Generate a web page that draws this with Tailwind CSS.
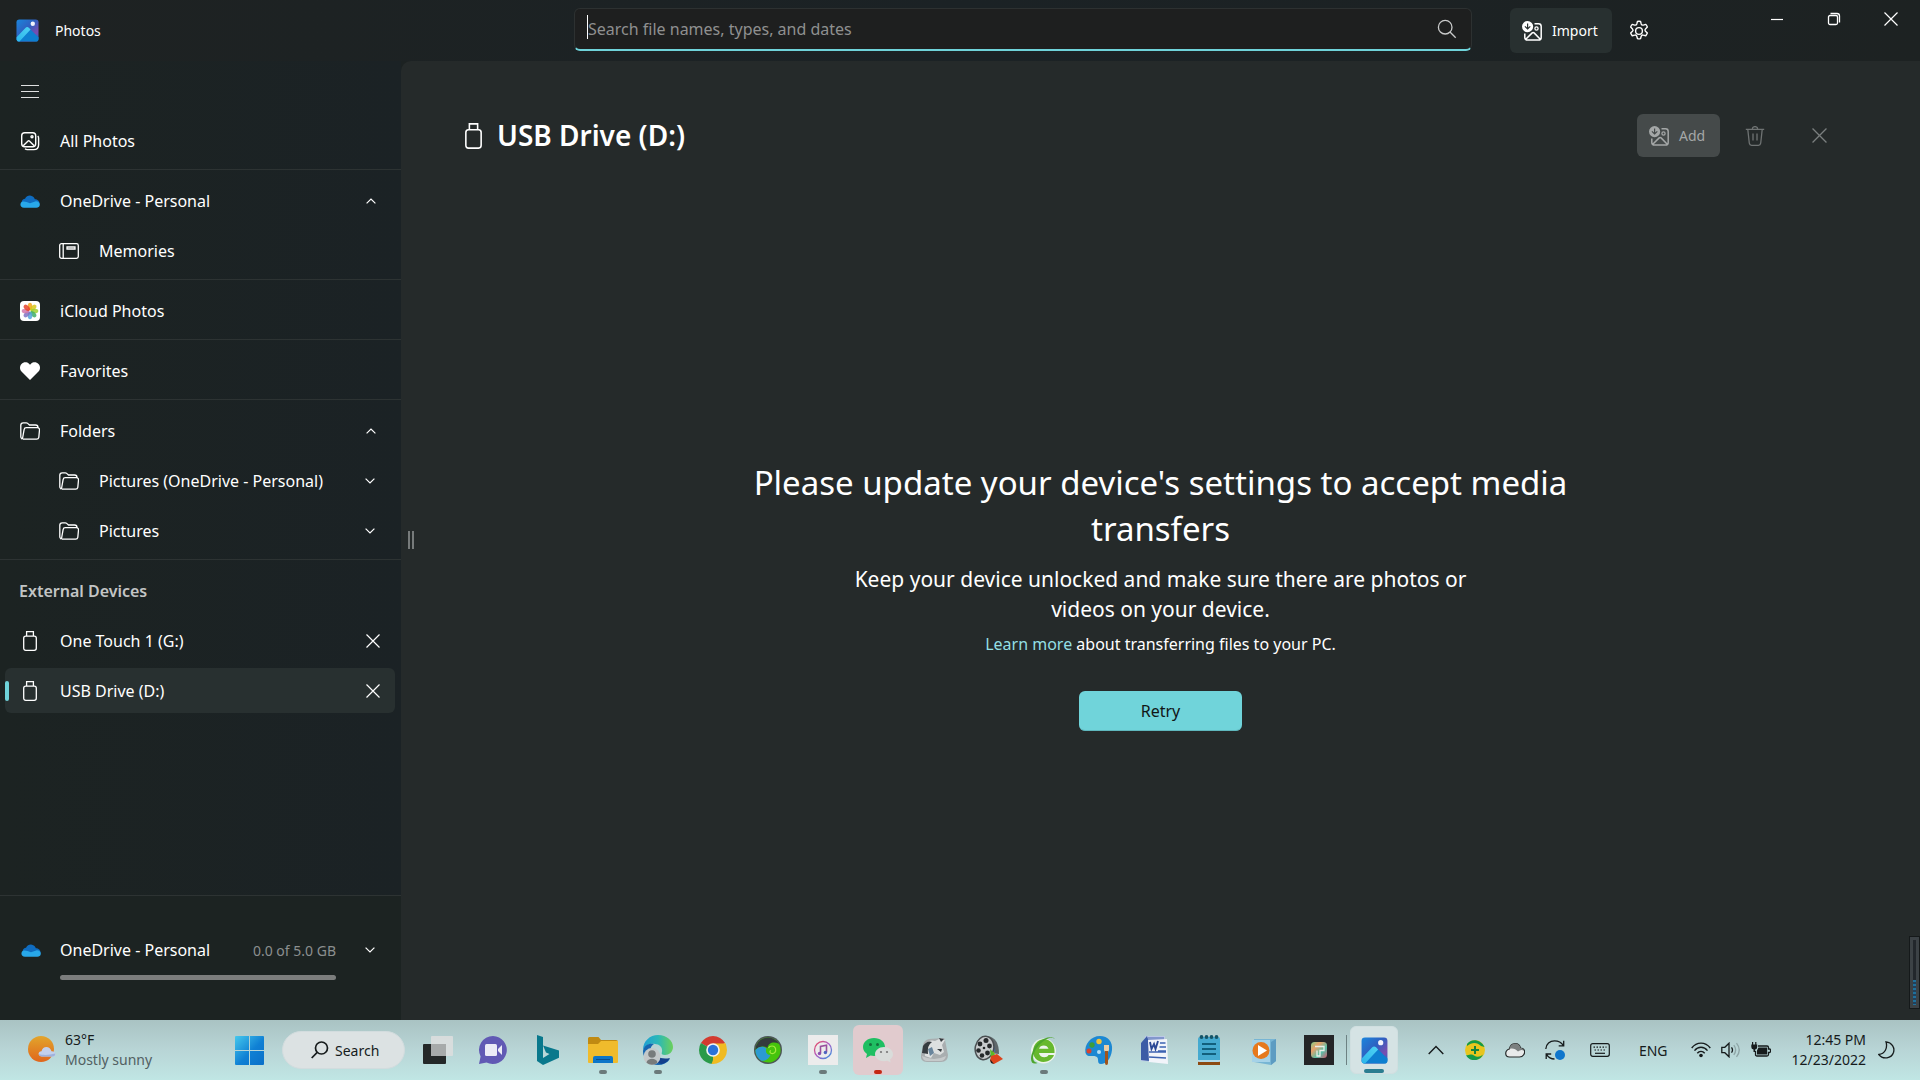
<!DOCTYPE html>
<html lang="en">
<head>
<meta charset="utf-8">
<title>Photos</title>
<script src="https://cdn.jsdelivr.net/npm/@tailwindcss/browser@4"></script>
</head>
<body class="flex min-h-screen flex-col overflow-x-hidden bg-[#1c2222] font-['Noto_Sans','Open_Sans',sans-serif] text-[16px] text-white">

<svg class="absolute size-0" aria-hidden="true">
  <defs>
    <linearGradient id="pg" x1="0" y1="0" x2="1" y2="1"><stop offset="0" stop-color="#1a86dc"/><stop offset=".45" stop-color="#2f5fc0"/><stop offset=".75" stop-color="#7a4cb0"/><stop offset="1" stop-color="#1470c4"/></linearGradient>
    <linearGradient id="pm" x1="0" y1="1" x2="1" y2="0"><stop offset="0" stop-color="#2bb5ea"/><stop offset="1" stop-color="#4fd2f4"/></linearGradient>
    <linearGradient id="win" x1="0" y1="0" x2="1" y2="1"><stop offset="0" stop-color="#45c8ec"/><stop offset=".55" stop-color="#0f80d4"/><stop offset="1" stop-color="#0a6fc8"/></linearGradient>
    <linearGradient id="sun" x1="0" y1="0" x2="0" y2="1"><stop offset="0" stop-color="#e2a52c"/><stop offset="1" stop-color="#e0661c"/></linearGradient>
    <linearGradient id="edge" x1="0" y1="0" x2="1" y2="0"><stop offset="0" stop-color="#1f9fd4"/><stop offset=".5" stop-color="#2ab8b8"/><stop offset="1" stop-color="#6cd05a"/></linearGradient>
    <linearGradient id="note" x1="0" y1="0" x2="1" y2="1"><stop offset="0" stop-color="#ee4a5c"/><stop offset=".5" stop-color="#a85cc8"/><stop offset="1" stop-color="#2f98e0"/></linearGradient>
    <linearGradient id="rain" x1="0" y1="0" x2="1" y2="1"><stop offset="0" stop-color="#7fd08a"/><stop offset=".3" stop-color="#e9a06a"/><stop offset=".65" stop-color="#55c0a8"/><stop offset="1" stop-color="#d8596e"/></linearGradient>
    <symbol id="photos" viewBox="0 0 24 24">
      <rect x=".5" y=".5" width="23" height="23" rx="3" fill="url(#pg)"/>
      <path d="M1 20 10 9.800q2-2 4 0L23.500 19v2a2.500 2.500 0 0 1-2.500 2.500H3A2.500 2.500 0 0 1 .6 21z" fill="#0e7fd0"/>
      <path d="M.6 19 9.800 9.300q1.800-1.800 3.800 0l1.600 1.700L3.600 23.500H3A2.500 2.500 0 0 1 .6 21z" fill="url(#pm)"/>
      <circle cx="17.500" cy="5" r="2.300" fill="#f1f2fc"/>
    </symbol>
    <symbol id="cloud" viewBox="0 0 20 13">
      <path d="M2 9C.8 5.600 3 3.800 5 3.700 6.500.8 9.700-.1 12.200 1.200c1.400.7 2.300 1.800 2.700 3.100 2.500 0 4.800 1.800 4.700 4.500z" fill="#0f6cc0"/>
      <path d="M4 12.800C.8 12.800-.3 10 .9 7.700 1.900 6 4.300 6.200 6.500 6.900L10 8.300l5.900-2c2.300.1 4.200 1.500 3.900 3.700-.3 1.700-1.500 2.800-3.400 2.800z" fill="#28a8ea"/>
    </symbol>
    <symbol id="folder" viewBox="0 0 20 18">
      <path d="M3 17.200h13.600c1.300 0 2-.8 2.200-1.900l.7-7.300c.1-1.400-.7-2.300-2-2.300H6.300c-1.200 0-2 .7-2.200 1.900L2.600 16c-.1.700-.5 1.100-.9.600-.6-.5-.9-1.100-.9-1.900V3.200C.8 1.800 1.800.8 3.200.8h3c.6 0 1.100.2 1.500.6L9.500 3h6c1.500 0 2.500.9 2.500 2.500" fill="none" stroke="currentColor" stroke-width="1.300"/>
    </symbol>
    <symbol id="usb" viewBox="0 0 14 20">
      <path d="M3.600 5V.7h6.800V5M2.800 5.200h8.400c1.300 0 2.100.8 2.100 2.100v9.900c0 1.300-.8 2.100-2.100 2.100H2.800C1.500 19.300.7 18.500.7 17.200V7.300c0-1.300.8-2.100 2.100-2.100z" fill="none" stroke="currentColor" stroke-width="1.300"/>
    </symbol>
    <symbol id="down" viewBox="0 0 10 6"><path d="m.6.600 4.400 4.400L9.400.6" fill="none" stroke="currentColor" stroke-width="1.200"/></symbol>
    <symbol id="up" viewBox="0 0 10 6"><path d="M.6 5.400 5 1l4.400 4.400" fill="none" stroke="currentColor" stroke-width="1.200"/></symbol>
    <symbol id="x" viewBox="0 0 14 14"><path d="m.5.500 13 13m0-13-13 13" fill="none" stroke="currentColor" stroke-width="1.200"/></symbol>
    <symbol id="import" viewBox="0 0 20 20">
      <path d="M12.500 2.700h4c1.600 0 2.700 1.100 2.700 2.700v11c0 1.600-1.100 2.700-2.700 2.700h-11c-1.600 0-2.700-1.100-2.700-2.700v-4M3.500 18.500l6.700-6.600c.6-.6 1.300-.6 1.900 0l6.400 6.600" fill="none" stroke="currentColor" stroke-width="1.500"/>
      <circle cx="14.500" cy="7.500" r="1.600" fill="none" stroke="currentColor" stroke-width="1.300"/>
      <path fill-rule="evenodd" d="M5.600 0a5.600 5.600 0 1 1 0 11.200A5.600 5.600 0 0 1 5.600 0zM5 2.500v4L3.300 4.900l-.8.800 3.100 3 3.100-3-.8-.8-1.700 1.600v-4z" fill="currentColor"/>
    </symbol>
  </defs>
</svg>

<header class="flex h-[61px] shrink-0 items-start bg-linear-to-r from-[#1e2222] via-[#1b2225] to-[#1d2222]">
  <div class="flex h-[61px] w-[574px] shrink-0 items-center gap-4 pl-4">
    <svg class="size-[23px]"><use href="#photos"/></svg>
    <h1 class="text-[14px]">Photos</h1>
  </div>
  <form class="relative mt-2 flex h-[43px] min-w-0 flex-1 items-center rounded-md border border-[#2d3131] border-b-2 border-b-[#6fd3da] bg-[#1e1f1f] pr-3">
    <input type="text" aria-label="Search" placeholder="Search file names, types, and dates" class="h-full min-w-0 flex-1 bg-transparent pl-[13px] text-[16px] outline-none placeholder:text-[#8f9090]">
    <span class="absolute left-3 top-1.5 h-6 w-px bg-white"></span>
    <button type="button" aria-label="Search" class="mr-0.5 text-[#c9caca]">
      <svg class="size-5" viewBox="0 0 20 20" fill="none" stroke="currentColor" stroke-width="1.300"><circle cx="8.200" cy="8.200" r="6.800"/><path d="m13 13 5.700 5.700"/></svg>
    </button>
  </form>
  <div class="flex w-[448px] shrink-0 items-start justify-between pl-[38px] pr-[22px]">
    <div class="flex items-center gap-4 pt-2">
      <button type="button" class="flex h-[45px] w-[102px] items-center gap-2.5 rounded-md bg-[#283030] pl-3 text-[14px]">
        <svg class="size-5 shrink-0"><use href="#import"/></svg>Import
      </button>
      <button type="button" aria-label="Settings">
        <svg class="size-[22px]" viewBox="0 0 24 24" fill="none" stroke="currentColor" stroke-width="1.500" stroke-linejoin="round"><circle cx="12" cy="12" r="3.700"/><path d="m9.600 4.300.7-2.700c1.100-.3 2.300-.3 3.400 0l.7 2.700c.3.900 1.300 1.500 2.300 1.200l2.700-.7c.8.900 1.300 1.800 1.700 2.900l-2 2c-.7.700-.7 1.900 0 2.600l2 2c-.4 1.100-.9 2-1.700 2.900l-2.700-.7c-1-.3-2 .3-2.300 1.200l-.7 2.700c-1.100.3-2.300.3-3.400 0l-.7-2.700c-.3-.9-1.300-1.500-2.300-1.200l-2.700.7c-.8-.9-1.300-1.800-1.700-2.900l2-2c.7-.7.7-1.900 0-2.600l-2-2c.4-1.100.9-2 1.700-2.900l2.700.7c1 .3 2-.3 2.300-1.200z"/></svg>
      </button>
    </div>
    <div class="flex gap-[43px] pt-3">
      <button type="button" aria-label="Minimize" class="size-[14px]"><svg class="size-[14px]" viewBox="0 0 14 14"><path d="M1 7.500h12" stroke="currentColor" stroke-width="1.200"/></svg></button>
      <button type="button" aria-label="Restore" class="size-[14px]"><svg class="size-[14px]" viewBox="0 0 14 14" fill="none" stroke="currentColor" stroke-width="1.300"><rect x="1.500" y="3.500" width="9" height="9" rx="1.500"/><path d="M3.500 1.500H10c1.500 0 2.500 1 2.500 2.500v6.500"/></svg></button>
      <button type="button" aria-label="Close" class="size-[14px]"><svg class="size-[14px]"><use href="#x"/></svg></button>
    </div>
  </div>
</header>

<div class="flex flex-1">
  <aside class="flex w-[401px] shrink-0 flex-col bg-linear-to-r from-[#1c2322] to-[#1b2225]">
    <nav class="flex flex-1 flex-col">
      <div class="border-b border-[#2d3333] pt-[5px] pb-[3px]">
        <button type="button" aria-label="Menu" class="flex h-[50px] items-center pl-5">
          <svg class="h-[15px] w-5" viewBox="0 0 20 15"><path d="M1 1.500h18M1 7.500h18M1 13.500h18" stroke="#dfe0e0" stroke-width="1.200"/></svg>
        </button>
        <a href="#" class="flex h-[50px] items-center gap-5 pl-5">
          <svg class="size-5" viewBox="0 0 20 20" fill="none" stroke="currentColor" stroke-width="1.400"><rect x="1.700" y="1.700" width="14" height="14" rx="3"/><path d="m3.200 14.800 4.600-4.600c.6-.6 1.200-.6 1.800 0l4.600 4.600M17.800 5c.6.600.8 1.300.8 2.200v6.500c0 3-1.900 4.900-4.900 4.900H7.200c-.9 0-1.600-.3-2.200-.8"/><circle cx="12" cy="5.700" r="1"/></svg>
          All Photos
        </a>
      </div>
      <div class="border-b border-[#2d3333] pt-[6px] pb-[3px]">
        <button type="button" class="flex h-[50px] w-full items-center gap-5 pl-5 pr-[25px]">
          <svg class="h-[13px] w-5"><use href="#cloud"/></svg><span class="flex-1 text-left">OneDrive - Personal</span>
          <svg class="h-[6px] w-[10px]"><use href="#up"/></svg>
        </button>
        <a href="#" class="flex h-[50px] items-center gap-5 pl-[59px]">
          <svg class="h-4 w-5" viewBox="0 0 20 16" fill="none" stroke="currentColor" stroke-width="1.300"><rect x=".7" y=".7" width="18.600" height="14.600" rx="1.800"/><path d="M4.200 1v14M8 4h8v2H8z"/></svg>
          Memories
        </a>
      </div>
      <div class="border-b border-[#2d3333] pt-[6px] pb-[3px]">
        <a href="#" class="flex h-[50px] items-center gap-5 pl-5">
          <svg class="size-5" viewBox="0 0 20 20"><rect width="20" height="20" rx="4" fill="#fff"/><g fill-opacity=".85"><ellipse cx="10" cy="5.500" rx="2.300" ry="3.800" fill="#f3a61c"/><ellipse cx="10" cy="5.500" rx="2.300" ry="3.800" fill="#d8c81c" transform="rotate(45 10 10)"/><ellipse cx="10" cy="5.500" rx="2.300" ry="3.800" fill="#9fd030" transform="rotate(90 10 10)"/><ellipse cx="10" cy="5.500" rx="2.300" ry="3.800" fill="#3fae68" transform="rotate(135 10 10)"/><ellipse cx="10" cy="5.500" rx="2.300" ry="3.800" fill="#56a6dc" transform="rotate(180 10 10)"/><ellipse cx="10" cy="5.500" rx="2.300" ry="3.800" fill="#7f74c4" transform="rotate(225 10 10)"/><ellipse cx="10" cy="5.500" rx="2.300" ry="3.800" fill="#d478ac" transform="rotate(270 10 10)"/><ellipse cx="10" cy="5.500" rx="2.300" ry="3.800" fill="#e8432a" transform="rotate(315 10 10)"/></g></svg>
          iCloud Photos
        </a>
      </div>
      <div class="border-b border-[#2d3333] pt-[6px] pb-[3px]">
        <a href="#" class="flex h-[50px] items-center gap-5 pl-5">
          <svg class="h-[18px] w-5" viewBox="0 0 20 18"><path d="M10 18 1.500 9.500C-.5 7.400-.5 4 1.500 2 3.500-.1 6.900-.2 9 1.800l1 1 1-1c2.100-2 5.500-1.900 7.500.2s2 5.400 0 7.500z" fill="#fff"/></svg>
          Favorites
        </a>
      </div>
      <div class="border-b border-[#2d3333] pt-[6px] pb-[3px]">
        <button type="button" class="flex h-[50px] w-full items-center gap-5 pl-5 pr-[25px]">
          <svg class="h-[18px] w-5"><use href="#folder"/></svg><span class="flex-1 text-left">Folders</span>
          <svg class="h-[6px] w-[10px]"><use href="#up"/></svg>
        </button>
        <button type="button" class="flex h-[50px] w-full items-center gap-5 pl-[59px] pr-[26px]">
          <svg class="h-[18px] w-5"><use href="#folder"/></svg><span class="flex-1 text-left">Pictures (OneDrive - Personal)</span>
          <svg class="h-[6px] w-[10px]"><use href="#down"/></svg>
        </button>
        <button type="button" class="flex h-[50px] w-full items-center gap-5 pl-[59px] pr-[26px]">
          <svg class="h-[18px] w-5"><use href="#folder"/></svg><span class="flex-1 text-left">Pictures</span>
          <svg class="h-[6px] w-[10px]"><use href="#down"/></svg>
        </button>
      </div>
      <h2 class="mt-[6px] flex h-[50px] items-center pl-[19px] font-semibold text-[#c3c5c5]">External Devices</h2>
      <div class="flex flex-col gap-[5px] pl-[5px] pr-1.5 pt-0.5">
        <div class="flex h-[45px] items-center pr-[15px]">
          <a href="#" class="flex flex-1 items-center gap-[23px] pl-[18px]"><svg class="h-5 w-[14px]"><use href="#usb"/></svg>One Touch 1 (G:)</a>
          <button type="button" aria-label="Remove One Touch 1"><svg class="size-[14px]"><use href="#x"/></svg></button>
        </div>
        <div class="flex h-[45px] items-center rounded-md bg-[#283030] pr-[15px]">
          <span class="h-5 w-1 rounded-full bg-[#6fd3da]"></span>
          <a href="#" class="flex flex-1 items-center gap-[23px] pl-[14px]"><svg class="h-5 w-[14px]"><use href="#usb"/></svg>USB Drive (D:)</a>
          <button type="button" aria-label="Remove USB Drive"><svg class="size-[14px]"><use href="#x"/></svg></button>
        </div>
      </div>
    </nav>
    <footer class="h-[125px] border-t border-[#2d3333] bg-[#1c2322] pt-[40px]">
      <div class="flex h-[28px] items-center pl-[21px] pr-[26px]">
        <svg class="h-[13px] w-5"><use href="#cloud"/></svg>
        <span class="ml-[19px] flex-1">OneDrive - Personal</span>
        <span class="text-[14px] text-[#8b8f8f]">0.0 of 5.0 GB</span>
        <svg class="ml-[29px] h-[6px] w-[10px]"><use href="#down"/></svg>
      </div>
      <div class="mt-[11px] mr-[65px] ml-[60px] h-[5px] rounded-full bg-[#7b7d7d]"></div>
    </footer>
  </aside>

  <main class="relative flex flex-1 flex-col rounded-tl-[10px] bg-[#252a2a]">
    <div class="flex items-center pt-[53px] pl-16 pr-[93px]">
      <svg class="h-[26px] w-[17px]" viewBox="0 0 14 20" preserveAspectRatio="none"><use href="#usb"/></svg>
      <h2 class="ml-[15px] flex-1 text-[28px] leading-[43px] font-semibold">USB Drive (D:)</h2>
      <button type="button" disabled class="flex h-[43px] w-[83px] items-center gap-2.5 rounded-md bg-[#454a4a] pl-3 text-[14px] text-[#a4a7a7]"><svg class="size-5 shrink-0"><use href="#import"/></svg>Add</button>
      <button type="button" disabled aria-label="Delete" class="ml-[25px] text-[#6f7373]"><svg class="size-5" viewBox="0 0 20 20" fill="none" stroke="currentColor" stroke-width="1.300"><path d="M.8 3.300h18.400M7.300 3c0-1.600 1.100-2.400 2.700-2.400s2.700.8 2.700 2.400M2.800 3.500l1.500 13.700c.2 1.300 1 2.100 2.300 2.100h6.800c1.300 0 2.100-.8 2.300-2.100l1.500-13.700M8 7.500v7M12 7.500v7"/></svg></button>
      <button type="button" disabled aria-label="Close" class="ml-[47px] text-[#7b7f7f]"><svg class="size-[15px]"><use href="#x"/></svg></button>
    </div>
    <div class="mx-auto flex w-[860px] flex-col items-center pt-[303px] text-center">
      <h3 class="text-[33px] leading-[46px]">Please update your device's settings to accept media<br>transfers</h3>
      <p class="mt-[12px] text-[21px] leading-[30px]">Keep your device unlocked and make sure there are photos or<br>videos on your device.</p>
      <p class="mt-[8px] text-[16px] leading-[24px]"><a href="#" class="text-[#93dfe4]">Learn more</a> about transferring files to your PC.</p>
      <button type="button" class="mt-[35px] h-[40px] w-[163px] rounded-md border-b border-[#5fb7bd] bg-[#70d4da] text-[16px] text-[#101616]">Retry</button>
    </div>
    <div class="absolute top-[470px] left-[7px] flex h-[18px] gap-0.5"><i class="w-[2px] bg-[#777b7b]"></i><i class="w-[2px] bg-[#777b7b]"></i></div>
    <div class="absolute right-0 bottom-[11px] flex h-[73px] w-[11px] flex-col justify-end border border-[#15191a] bg-[#3c4246] p-[3px]">
      <div class="flex flex-1 flex-col justify-end bg-[#22272c]"><div class="h-[25px] bg-[repeating-linear-gradient(#1f709c_0_2px,#23405a_2px_4px)]"></div></div>
    </div>
  </main>
</div>

<footer class="flex h-[60px] shrink-0 items-center bg-linear-to-b from-[#a9c3c3] via-[#b8d5d6] to-[#c0e6e4] text-[14px] text-[#161b1c]">
  <button type="button" class="flex h-full w-[221px] shrink-0 items-center gap-[9px] pl-7 text-left leading-5">
    <svg class="h-7 w-7" viewBox="0 0 28 28"><circle cx="13" cy="13" r="13" fill="url(#sun)"/><path d="M14 20.500c-4.500 0-4.500-5-.5-5.200 1-5.600 8.500-5.800 10 0 5-.2 5.500 5.200 1 5.200z" fill="#c3d0ec"/><path d="M14 20.500c-2 0-3-1.200-3-2.500 4 1.500 11 1 16.300-.5 0 1.700-1 3-2.800 3z" fill="#9fb2dc"/></svg>
    <span><span class="block">63°F</span><span class="block text-[#526062]">Mostly sunny</span></span>
  </button>
  <div class="flex h-full items-center">
    <button type="button" aria-label="Start" class="ml-[14px]"><svg class="size-[29px]" viewBox="0 0 29 29"><path d="M1 0h13v14H0V1q0-1 1-1zM15 0h13q1 0 1 1v13H15zM0 15h14v14H1q-1 0-1-1zM15 15h14v13q0 1-1 1H15z" fill="url(#win)"/></svg></button>
    <button type="button" class="mr-[5px] ml-[18px] flex h-[38px] w-[123px] items-center gap-[6px] rounded-full border border-[#d2dcde] bg-[#dce2e3] pl-7">
      <svg class="size-[18px]" viewBox="0 0 18 18" fill="none" stroke="currentColor" stroke-width="1.700"><circle cx="10.500" cy="7" r="6"/><path d="m6.200 11.400-5.500 5.600"/></svg>Search
    </button>
    <button type="button" aria-label="Task view" class="flex h-full w-[55px] items-center justify-center"><svg class="size-[30px]" viewBox="0 0 30 30"><rect x="0" y="9" width="23" height="20" rx="1" fill="#242828"/><rect x="8" y="1" width="22" height="20" rx="1" fill="#dcdede" fill-opacity=".9"/><path d="M8 9h15v12H8z" fill="#a7aaaa"/></svg></button>
    <button type="button" aria-label="Chat" class="flex h-full w-[55px] items-center justify-center"><svg class="size-[30px]" viewBox="0 0 30 30"><path d="M15 1a14 14 0 1 1-6.500 26.500L1 29l1.600-7.500A14 14 0 0 1 15 1z" fill="#6159b4"/><rect x="7" y="9" width="12" height="12" rx="1.500" fill="#ecebf6"/><path d="m20 14 4-4v10l-4-4z" fill="#ecebf6"/></svg></button>
    <button type="button" aria-label="Bing" class="flex h-full w-[55px] items-center justify-center"><svg class="size-[30px]" viewBox="0 0 30 30"><path d="m4 0 6 2v21l6.500-4-3.500-1.500-3-7L26 15.500v7.300L10 30l-6-4z" fill="#09788c"/></svg></button>
    <button type="button" aria-label="File Explorer" class="relative flex h-full w-[55px] items-center justify-center"><svg class="size-[30px]" viewBox="0 0 30 30"><path d="M0 3.500Q0 2 1.500 2h9L13 5h15q2 0 2 2v4H0z" fill="#c08a12"/><path d="M0 9h10l3-3h17v21q0 1-1 1H1q-1 0-1-1z" fill="#f0bb2c"/><path d="M5 28v-5q0-2 2-2h16q2 0 2 2v5z" fill="#0d76c8"/><path d="M8 24.500h14" stroke="#0a4f90" stroke-width="1"/></svg><i class="absolute bottom-1.5 h-1 w-2 rounded-full bg-[#6b7a7b]"></i></button>
    <button type="button" aria-label="Edge" class="relative flex h-full w-[55px] items-center justify-center"><svg class="size-[30px]" viewBox="0 0 30 30"><path d="M0 15C0 6 7 0 15 0c9 0 15 6 15 12 0 5-4 8-8 8-3 0-4-1-3-3 1-5-3-8-7-8C7 8 2 11 0 15z" fill="url(#edge)"/><path d="M0 16C1 10 6 8 11 9c-4 2-5 8-2 13 3 5 9 7 18 2-3 4-7 6-12 6C6 30 0 24 0 16z" fill="#1565b0"/><path d="M12 15c0 6 5 10 15 8-1 2-4 5-8 6-5 0-9-5-7-14z" fill="#123f8c"/><circle cx="9" cy="21.500" r="8.500" fill="#c3c8c9"/><circle cx="9" cy="19" r="3.800" fill="#777b7b"/><path d="M3.500 27.500c1-5 10-5 11 0-3 3-8 3-11 0z" fill="#777b7b"/></svg><i class="absolute bottom-1.5 h-1 w-2 rounded-full bg-[#6b7a7b]"></i></button>
    <button type="button" aria-label="Chrome" class="flex h-full w-[55px] items-center justify-center"><svg class="size-[28px]" viewBox="0 0 28 28"><path d="M14 14 1.900 7A14 14 0 0 1 26.100 7z" fill="#d33b30"/><path d="M14 14 26.100 7A14 14 0 0 1 14 28z" fill="#f0bb22"/><path d="M14 14v14A14 14 0 0 1 1.900 7z" fill="#2a9a48"/><path d="M14 7.500h12.500L27.200 9 20 17l-6 11-1.500-.1 3-8z" fill="#f0bb22"/><circle cx="14" cy="14" r="6.800" fill="#f2f4f4"/><circle cx="14" cy="14" r="5.200" fill="#2a72da"/></svg></button>
    <button type="button" aria-label="Webroot" class="flex h-full w-[55px] items-center justify-center"><svg class="size-[28px]" viewBox="0 0 28 28"><circle cx="14" cy="14" r="14" fill="#4c5557"/><circle cx="14" cy="14" r="12.600" fill="#45c40c"/><path d="M1.400 14A12.600 12.600 0 0 1 25 8c-5-3-11-1-11.500 4-4-2.500-9-1.500-12.100 2z" fill="#343b3d"/><path d="M1.400 14c3-3.500 8-4.500 11-1.500-1.500 3.500.5 6.500 4 6.500-1.500 4-6 6.500-9 5.700A12.600 12.600 0 0 1 1.400 14z" fill="#2b9ad2"/><path d="M14.500 12c1-2.500 6-3 7 .5.800 3-1 5.500-4 5-2-.5-2-2.500-.5-3" fill="none" stroke="#a4ea3e" stroke-width="1.200"/></svg></button>
    <button type="button" aria-label="iTunes" class="relative flex h-full w-[55px] items-center justify-center"><svg class="size-[30px]" viewBox="0 0 30 30"><path d="M0 0h30v30H0z" fill="#ececec"/><circle cx="15" cy="15" r="8.500" fill="none" stroke="url(#note)" stroke-width="1.300"/><path d="M12.500 18v-6.500l6-1.300V17" fill="none" stroke="#9a4f9c" stroke-width="1.600"/><circle cx="11.500" cy="18.500" r="1.700" fill="#8a4fb0"/><circle cx="17.400" cy="17.500" r="1.700" fill="#5064c0"/></svg><i class="absolute bottom-1.5 h-1 w-2 rounded-full bg-[#6b7a7b]"></i></button>
    <button type="button" aria-label="WeChat" class="relative mx-[3px] flex h-[50px] w-[50px] items-center justify-center rounded-md bg-[#e1cbce]"><svg class="size-[30px]" viewBox="0 0 30 30"><path d="M11 3c6.500 0 11 4 11 9s-4.500 9-11 9c-1 0-2.500-.2-3.500-.5L3 23l1-4C1.500 17 0 15 0 12c0-5 4.500-9 11-9z" fill="#1fbf62"/><circle cx="7.500" cy="9.500" r="1.500" fill="#136f3c"/><circle cx="14.500" cy="9.500" r="1.500" fill="#136f3c"/><path d="M21 12c5 0 9 3.200 9 7.300 0 2.200-1.200 4-3 5.300l.7 2.900-3.300-1.700c-1 .3-2 .5-3.400.5-5 0-9-3-9-7s4-7.300 9-7.300z" fill="#d9dcda"/><circle cx="18" cy="17" r="1.100" fill="#777"/><circle cx="24" cy="17" r="1.100" fill="#777"/></svg><i class="absolute bottom-[1px] h-1 w-2 rounded-full bg-[#c42814]"></i></button>
    <button type="button" aria-label="Disk utility" class="flex h-full w-[55px] items-center justify-center"><svg class="size-[28px]" viewBox="0 0 28 28"><path d="M3 9q1-5 6-6l14-1q2 0 2 2l3 15q0 7-7 7H7q-7 0-6-7z" fill="#a9aeb0"/><path d="M4 9q5-6 11-4l6-3 4 2-3 5 2 7-4 3-6-2-3 5-6-2z" fill="#dde0e0"/><path d="M3 10q4-6 9-4-5 3-4 12l-6-1zM19 2l5 1-3 3zM17 13h5l-1 3z" fill="#363c40"/><path d="m8 13 4-2 2 6-4 3z" fill="#69859c"/><path d="M2 20q12 6 24 0-1 5-6 5H7q-4 0-5-5z" fill="#c6cacb"/></svg></button>
    <button type="button" aria-label="Movie Maker" class="flex h-full w-[55px] items-center justify-center"><svg class="size-[30px]" viewBox="0 0 30 30"><path d="M14 1q11 2 11 18l-9-1z" fill="#5f686b"/><path d="m14 5 7 14-5 2-3-10z" fill="#eca21c"/><path d="m14 6 6 4 1 8z" fill="#376fc6"/><ellipse cx="10.500" cy="13" rx="10" ry="12.500" fill="#4a4f52" transform="rotate(12 10.500 13)"/><ellipse cx="10.500" cy="13" rx="8.500" ry="11" fill="#c7cbcd" transform="rotate(12 10.500 13)"/><g fill="#24282a"><circle cx="12" cy="5.500" r="2.500"/><circle cx="6" cy="9" r="2.400"/><circle cx="15.500" cy="11" r="2.400"/><circle cx="4.500" cy="15.500" r="2.300"/><circle cx="13.500" cy="18" r="2.400"/><circle cx="8" cy="20.500" r="2.300"/><circle cx="10" cy="13" r="1.300"/></g><path d="m16 14 5 5-4 5z" fill="#58ba28"/><path d="m17 21 6-2 6 5-9 5q-2 0-4-3z" fill="#dd441c"/><path d="m16 24 4 5-3-1z" fill="#222"/></svg></button>
    <button type="button" aria-label="Internet browser" class="relative flex h-full w-[55px] items-center justify-center"><svg class="size-[30px]" viewBox="0 0 30 30"><circle cx="14.500" cy="16" r="12.500" fill="#edf4ec"/><path d="M25.500 18H10c.5 5 8 5.500 9.500 2h5.500c-3 8-14 9-18.500 3.500S4 8 11 5c8-3.200 15.500 3 14.500 13zM10 13.800h9.500c-1-4.500-8.500-4.500-9.500 0z" fill="#67b82e"/><path d="M25.500 4C21-1 6 5 2.500 20c-1.600 7 1 10 6 8C0 27 5 13 14 6.500 20 2 25 1.500 25.500 4z" fill="#4da52c"/></svg><i class="absolute bottom-1.5 h-1 w-2 rounded-full bg-[#6b7a7b]"></i></button>
    <button type="button" aria-label="Paint" class="flex h-full w-[55px] items-center justify-center"><svg class="size-[30px]" viewBox="0 0 30 30"><path d="M16 1c8 0 13 6 12 14-1 9-6 14-11 14-5-.3-1-6-5-7.500C8 20 3 23 1.500 18 0 9 7 1 16 1z" fill="#1d88d2"/><circle cx="15" cy="6.500" r="2.700" fill="#f3c33a"/><circle cx="8" cy="10" r="2.700" fill="#3e9d3a"/><circle cx="5" cy="16" r="2.500" fill="#d9432e"/><circle cx="15" cy="17" r="2" fill="#b7e0f4"/><path d="M20 10h5v5q0 2-2.500 2T20 15z" fill="#e9cda6"/><path d="M21 16h3v12q0 2-1.500 2T21 28z" fill="#a0541a"/></svg></button>
    <button type="button" aria-label="Word" class="flex h-full w-[55px] items-center justify-center"><svg class="size-[30px]" viewBox="0 0 30 30"><path d="M6 1h20v6l-8 20-16-1z" fill="#bcc9e6"/><path d="M8 1 2 8v17l8 1V7z" fill="#3c5ca6"/><path d="M9 2h16v5H9z" fill="#8296cc"/><path d="m9 5 19-1 1 25-19-2z" fill="#f2f4fa"/><path d="m11 7 1.500 7 2.500-5 1.500 5 2.500-8" fill="none" stroke="#2c4896" stroke-width="1.900"/><path d="M21 8h5.500m-6 4H27m-8 4h8m-17 1h17m-17 5 17 1" fill="none" stroke="#3c62b2" stroke-width="1.600"/></svg></button>
    <button type="button" aria-label="Notepad" class="flex h-full w-[55px] items-center justify-center"><svg class="size-[30px]" viewBox="0 0 30 30"><path d="M4 26h22v4H4z" fill="#8c4a12"/><rect x="4" y="2" width="22" height="25" rx="2" fill="#45aad0"/><path d="M4 26h22" stroke="#eef3f4" stroke-width="1.300"/><path d="M8 9h14M8 14h14M8 19h14" stroke="#125f7c" stroke-width="1.800"/><g fill="#145468"><circle cx="7.500" cy="2" r="1.900"/><circle cx="12.500" cy="2" r="1.900"/><circle cx="17.500" cy="2" r="1.900"/><circle cx="22.500" cy="2" r="1.900"/></g></svg></button>
    <button type="button" aria-label="Media Player" class="flex h-full w-[55px] items-center justify-center"><svg class="size-[30px]" viewBox="0 0 30 30"><path d="M5 4h22v22l-5 4-17-3z" fill="#77b5d4"/><path d="m22 7 5-3v22l-5 4z" fill="#5d9cc2"/><path d="M3 5h18v22H3z" fill="#a5d2e8"/><circle cx="12" cy="15.500" r="8.500" fill="#e6791e"/><path d="m9 10 9 5.500L9 21z" fill="#fff"/></svg></button>
    <button type="button" aria-label="Photo tools" class="flex h-full w-[55px] items-center justify-center"><svg class="size-[30px]" viewBox="0 0 30 30"><path d="M0 0h30v30H0z" fill="#242527"/><rect x="7" y="7" width="16" height="16" rx="3.500" fill="url(#rain)"/><path d="M11 11.500h9v4h-4V21h-3v-5.500" fill="none" stroke="#e9efe9" stroke-width="1.300"/></svg></button>
    <i class="h-[30px] w-px bg-[#6d8283]"></i>
    <button type="button" aria-label="Photos" class="relative ml-[3px] flex h-[48px] w-[48px] items-center justify-center rounded-md border border-[#d0dfe0] bg-[#d5e3e4]"><svg class="size-[27px]"><use href="#photos"/></svg><i class="absolute bottom-0 h-1 w-5 rounded-full bg-[#2b7d90]"></i></button>
  </div>
  <div class="ml-auto flex h-full shrink-0 items-center pr-[25px]">
    <button type="button" aria-label="Hidden icons" class="mr-[21px]"><svg class="h-[10px] w-4" viewBox="0 0 16 10"><path d="m.7 9 7.300-7.500L15.300 9" fill="none" stroke="currentColor" stroke-width="1.400"/></svg></button>
    <svg class="mr-5 size-5" viewBox="0 0 20 20"><circle cx="10" cy="10" r="10" fill="#e8c51e"/><path d="M2 4C6-2 16-1 19.500 7L16 6C12 2 7 2 2 6zM1 15c3 1 5-2 8 .5 3 2 6 1.500 9-1C15 22 4 22 1 15z" fill="#139a48"/><path d="M10 6v8M6 10h8" stroke="#12843c" stroke-width="2"/></svg>
    <svg class="mr-5 h-[15px] w-5" viewBox="0 0 20 15"><path d="M4.500 14C-.5 14-.5 7.500 4.300 6 6-1 14-1 15.500 5c4 0 5.300 4 3 7-.8 1.300-2 2-4 2z" fill="#e8eaea" stroke="#242828" stroke-width="1.200"/><path d="M4.300 6C6-1 14-1 15.500 5c1.700.2 3 1 3.500 3-2-2-4-1-6 .5C10.500 6 8 5 4.300 6z" fill="#7b8080"/></svg>
    <svg class="mr-[25px] size-5" viewBox="0 0 20 20" fill="none" stroke="currentColor" stroke-width="1.300"><path d="M.8 9C1 4 5 .8 9.500.8c4 0 7 1.700 8.800 4.700M18.700.8v5h-5M9.500 19c-3 0-6-1.500-8-4.700M1.200 19v-5h5"/><circle cx="15" cy="15" r="5" fill="#0f76cc" stroke="none"/></svg>
    <svg class="mr-[29px] h-[14px] w-5" viewBox="0 0 20 14" fill="none" stroke="currentColor" stroke-width="1.200"><rect x=".7" y=".7" width="18.600" height="12.600" rx="2"/><path d="M3.500 4.200h13M4.500 7h11" stroke-dasharray="1.500 1.500"/><path d="M5 10.300h10"/></svg>
    <span class="mr-[23px]">ENG</span>
    <svg class="mr-[10px] h-4 w-5" viewBox="0 0 20 16" fill="none" stroke="currentColor" stroke-width="1.400"><path d="M.7 6c5-6.500 13.600-6.500 18.600 0M3.500 8.600c3.500-4.500 9.500-4.500 13 0M6.300 11.200c2-2.500 5.400-2.500 7.400 0"/><circle cx="10" cy="13.500" r="1.800" fill="currentColor" stroke="none"/></svg>
    <svg class="mr-[10px] h-4 w-5" viewBox="0 0 20 16" fill="none" stroke="currentColor" stroke-width="1.300"><path d="M.8 5.300h3L8 1.200v13.600l-4.200-4.100h-3zM10.500 5.300c1.200 1.600 1.200 3.800 0 5.400"/><path d="M12.800 3.200c2.300 3 2.300 6.600 0 9.600M15.500 1.200c3.500 4.300 3.500 9.300 0 13.600" stroke="#8ea5a6"/></svg>
    <svg class="mr-[21px] h-4 w-5" viewBox="0 0 20 16"><path d="M7 4h9q1.500 0 1.500 1.500V7h1q1 0 1 1v1.500q0 1-1 1h-1v2q0 1.500-1.500 1.500H6q-1.500 0-1.500-1.500V9" fill="none" stroke="currentColor" stroke-width="1.300"/><path d="M7.500 5.500h8.700v7H6V8.500zM1 0h1.200v2.500h2V0h1.200v2.500h.8V5q0 2-2 2.500V10H2.500V7.500Q.3 7 .3 5V2.500H1z" fill="currentColor"/></svg>
    <button type="button" class="mr-[12px] text-right leading-5"><span class="block">12:45 PM</span><span class="block">12/23/2022</span></button>
    <svg class="h-[18px] w-[17px]" viewBox="0 0 17 18"><path d="M8 .8C14 1.500 17 6.500 15.500 11.500 13.500 17.500 5 19 .8 13.500 7 13 9.800 7 8 .8z" fill="none" stroke="currentColor" stroke-width="1.300"/></svg>
  </div>
</footer>
</body>
</html>
